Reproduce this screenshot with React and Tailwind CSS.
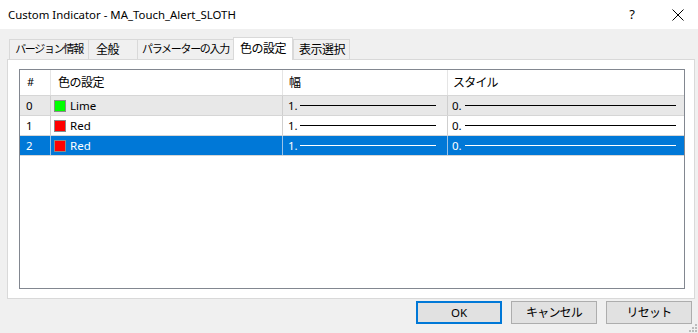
import React from "react";

const rows = [
  { n: "0", name: "Lime", color: "#00ff00", bg: "bg-[#e8e8e8]", sel: false },
  { n: "1", name: "Red", color: "#ff0000", bg: "bg-white", sel: false },
  { n: "2", name: "Red", color: "#ff0000", bg: "bg-[#0078d7]", sel: true },
];

function Tab({ label, active, last, w, tight }) {
  const tr = tight ? "text-[11px] tracking-[-1.3px] justify-center" : "tracking-[-0.5px]";
  if (active) {
    return (
      <div
        className={`relative z-10 -mb-px flex h-[23px] items-start whitespace-nowrap border border-b-0 border-[#d9d9d9] bg-white pl-[6px] pt-[2px] ${tr} ${w}`}
      >
        {label}
      </div>
    );
  }
  return (
    <div
      className={`flex h-[20px] items-center whitespace-nowrap border-t border-l border-[#d9d9d9] bg-[#f0f0f0] ${tr} ${last ? "border-r" : ""} ${w}`}
    >
      {label}
    </div>
  );
}

export default function App() {
  return (
    <div
      className="relative flex h-[333px] w-[698px] flex-col overflow-hidden bg-[#f0f0f0] text-[12px] text-black"
      style={{ fontFamily: '"Noto Sans", "Noto Sans CJK JP", sans-serif' }}
    >
      <div className="flex h-[29px] shrink-0 items-center justify-between bg-white pl-[8px]">
        <span className="text-[11.4px]">Custom Indicator - MA_Touch_Alert_SLOTH</span>
        <div className="flex items-center">
          <span className="mr-[37px] text-[13px]">?</span>
          <svg width="12" height="12" viewBox="0 0 12 12" className="mr-[14px]">
            <path d="M0.5 0.5 L11.5 11.5 M11.5 0.5 L0.5 11.5" stroke="#000" strokeWidth="1" />
          </svg>
        </div>
      </div>

      <div className="flex flex-col px-[3px] pt-[8px]">
        <div className="ml-[6px] flex h-[22px] items-end">
          <Tab label="バージョン情報" tight w="w-[79px]" />
          <Tab label="全般" w="w-[49px] pl-[7px]" />
          <Tab label="パラメーターの入力" tight w="w-[96px]" />
          <Tab label="色の設定" active w="w-[60px]" />
          <Tab label="表示選択" last w="w-[57px] pl-[5px]" />
        </div>
        <div className="ml-[4px] h-[240px] w-[688px] border border-[#d9d9d9] bg-white pl-[11px] pr-[9px] pt-[9px]">
          <div className="h-[220px] border border-[#828790] bg-white">
            <div className="grid h-[26px] grid-cols-[30px_232px_165px_1fr] border-b border-[#d6d6d6]">
              <div className="flex items-center pl-[7px] text-[11px]">#</div>
              <div className="flex items-center border-l border-[#e5e5e5] pl-[7px] tracking-[-0.5px]">色の設定</div>
              <div className="flex items-center border-l border-[#e5e5e5] pl-[6px]">幅</div>
              <div className="flex items-center border-l border-[#e5e5e5] pl-[5px] tracking-[-0.8px]">スタイル</div>
            </div>
            {rows.map((r) => {
              const txt = r.sel ? "text-white" : "text-black";
              const line = r.sel ? "bg-white" : "bg-black";
              const vb = r.sel ? "border-[#9cc3e8]" : "border-[#cfcfcf]";
              return (
                <div
                  key={r.n}
                  className={`grid h-[20px] grid-cols-[30px_232px_165px_1fr] border-b border-[#d6d6d6] text-[11.5px] ${r.bg} ${txt}`}
                >
                  <div className="flex items-center pl-[6px]">{r.n}</div>
                  <div className={`flex items-center border-l ${vb} pl-[3px]`}>
                    <span
                      className="mr-[4px] inline-block h-[12px] w-[12px] border border-[#8a8a8a]"
                      style={{ backgroundColor: r.color }}
                    />
                    {r.name}
                  </div>
                  <div className={`flex items-center border-l ${vb} pl-[5px] pr-[11px]`}>
                    <span className="w-[12px]">1.</span>
                    <span className={`h-px flex-1 ${line}`} />
                  </div>
                  <div className={`flex items-center border-l ${vb} pl-[4px] pr-[8px]`}>
                    <span className="w-[13px]">0.</span>
                    <span className={`h-px flex-1 ${line}`} />
                  </div>
                </div>
              );
            })}
          </div>
        </div>
        <div className="mt-[2px] flex justify-end gap-[9px] pr-[3px]">
          <button className="flex h-[23px] w-[86px] items-center justify-center border-2 border-[#0078d7] bg-[#e1e1e1] text-[11.5px]">
            OK
          </button>
          <button className="flex h-[23px] w-[86px] items-center justify-center border border-[#adadad] bg-[#e1e1e1] tracking-[-0.8px]">
            キャンセル
          </button>
          <button className="flex h-[23px] w-[86px] items-center justify-center border border-[#adadad] bg-[#e1e1e1] tracking-[-0.8px]">
            リセット
          </button>
        </div>
      </div>

      <svg width="10" height="10" viewBox="0 0 10 10" className="absolute bottom-0 right-0">
        <rect x="7" y="1" width="2" height="2" fill="#bcbcbc" />
        <rect x="4" y="4" width="2" height="2" fill="#bcbcbc" />
        <rect x="7" y="4" width="2" height="2" fill="#bcbcbc" />
        <rect x="1" y="7" width="2" height="2" fill="#bcbcbc" />
        <rect x="4" y="7" width="2" height="2" fill="#bcbcbc" />
        <rect x="7" y="7" width="2" height="2" fill="#bcbcbc" />
      </svg>
    </div>
  );
}
